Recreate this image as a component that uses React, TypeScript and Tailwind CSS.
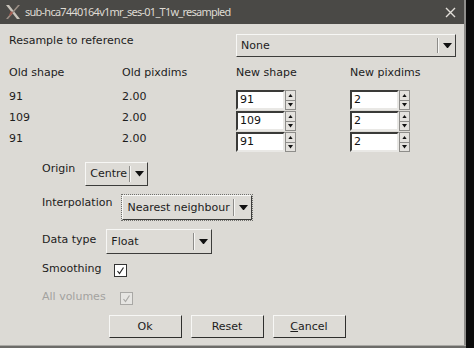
import React from "react"

const font = { fontFamily: '"DejaVu Sans", sans-serif' }

function Arrow({ up = false, size = 8 }: { up?: boolean; size?: number }) {
  const h = size / 2 + 1
  return (
    <svg width={size} height={h} viewBox={`0 0 ${size} ${h}`}>
      {up ? (
        <polygon points={`0,${h} ${size},${h} ${size / 2},0`} fill="#111" />
      ) : (
        <polygon points={`0,0 ${size},0 ${size / 2},${h}`} fill="#111" />
      )}
    </svg>
  )
}

function Dropdown({ label, width, focus = false, height = 24 }: { label: string; width: string; focus?: boolean; height?: number }) {
  return (
    <div
      className={`${width} flex shrink-0 items-center border border-t-[#f7f7f5] border-l-[#f7f7f5] border-b-[#3c3c3a] border-r-[#3c3c3a] bg-[#dddbd6] ${focus ? "outline outline-1 outline-dotted outline-[#6f6f6c]" : ""}`}
      style={{ height }}
    >
      <span className="flex-1 overflow-hidden whitespace-nowrap pl-[4px] text-[11px] leading-[14px] text-[#1c1c1c]">{label}</span>
      <div className="flex h-full items-center py-[3px]">
        <div className="h-full w-[2px] border-l border-l-[#8d8c89] border-r border-r-[#f7f7f5]" />
      </div>
      <div className="flex w-[16px] items-center justify-center">
        <Arrow size={9} />
      </div>
    </div>
  )
}

function SpinBox({ value }: { value: string }) {
  return (
    <div className="flex h-[20px] w-[60px]">
      <div className="flex flex-1 items-center border-2 border-t-[#3a3a38] border-l-[#3a3a38] border-b-[#e9e8e5] border-r-[#e9e8e5] bg-white pl-[2px] text-[11px] leading-[14px] text-[#111]">
        {value}
      </div>
      <div className="flex w-[11px] flex-col border border-[#8e8d8a] bg-[#dddbd6]">
        <div className="flex flex-1 items-center justify-center border-b border-b-[#8e8d8a] bg-[#e4e2de]">
          <Arrow up size={5} />
        </div>
        <div className="flex flex-1 items-center justify-center bg-[#e4e2de]">
          <Arrow size={5} />
        </div>
      </div>
    </div>
  )
}

function CheckBox({ disabled = false }: { disabled?: boolean }) {
  const c = disabled ? "#a9a8a5" : "#222"
  return (
    <div
      className={`flex h-[13px] w-[13px] shrink-0 items-center justify-center border ${disabled ? "border-[#a9a8a5] bg-[#e6e5e2]" : "border-[#333] bg-white"}`}
    >
      <svg width="9" height="9" viewBox="0 0 9 9">
        <polyline points="1.5,5 3.5,7.5 7.5,1.5" fill="none" stroke={c} strokeWidth="1.2" />
      </svg>
    </div>
  )
}

function Button({ children }: { children: React.ReactNode }) {
  return (
    <div className="flex h-[23px] w-[73px] items-center justify-center border border-t-[#f7f7f5] border-l-[#f7f7f5] border-b-[#2f2f2d] border-r-[#2f2f2d] bg-[#dddbd6] text-[11px] leading-[14px] text-[#1c1c1c]">
      {children}
    </div>
  )
}

function XLogo() {
  return (
    <svg width="16" height="16" viewBox="0 0 16 16">
      <polygon points="1,1 4,1 15,15 12,15" fill="#c9c4bb" />
      <polygon points="13,1 15,1 3,15 1,15" fill="#9c8f86" />
      <polygon points="6,7 8,9 5,12 4,11" fill="#a35b50" />
    </svg>
  )
}

export default function App() {
  const rows = [
    ["91", "2.00", "91", "2"],
    ["109", "2.00", "109", "2"],
    ["91", "2.00", "91", "2"],
  ]

  return (
    <div className="flex h-[348px] w-[474px] flex-col overflow-hidden bg-[#0b0b0b]" style={font}>
      <div className="flex h-[345px]">
        <div className="flex w-[464px] flex-col bg-[#dcdad5]">
          {/* Title bar */}
          <div className="flex h-[24px] shrink-0 items-center bg-[#4a4946] pl-[5px] pr-[8px]">
            <XLogo />
            <span className="ml-[4px] flex-1 text-[11px] tracking-[-0.75px] text-[#dedad3]" style={{ fontFamily: '"Noto Sans", sans-serif' }}>
              sub-hca7440164v1mr_ses-01_T1w_resampled
            </span>
            <svg width="11" height="11" viewBox="0 0 11 11">
              <path d="M1 1 L10 10 M10 1 L1 10" stroke="#e2dfd9" strokeWidth="1.4" />
            </svg>
          </div>

          {/* Shapes */}
          <div className="grid grid-cols-[113px_114px_114px_1fr] pl-[9px] pt-[10px] pr-[8px] text-[11px] leading-[14px] text-[#1c1c1c]">
            <div className="col-span-2 h-[23px]">Resample to reference</div>
            <div className="col-span-2">
              <Dropdown label="None" width="w-[220px]" height={23} />
            </div>

            <div className="mt-[9px]">Old shape</div>
            <div className="mt-[9px]">Old pixdims</div>
            <div className="mt-[9px]">New shape</div>
            <div className="mt-[9px]">New pixdims</div>

            <div className="col-span-4 h-[10px]" />
            {rows.map((r, i) => (
              <React.Fragment key={i}>
                <div className="h-[21px]">{r[0]}</div>
                <div className="h-[21px]">{r[1]}</div>
                <div className="h-[21px]">
                  <SpinBox value={r[2]} />
                </div>
                <div className="h-[21px]">
                  <SpinBox value={r[3]} />
                </div>
              </React.Fragment>
            ))}
          </div>

          {/* Options */}
          <div className="flex flex-col pl-[42px] pt-[9px] text-[11px] leading-[14px] text-[#1c1c1c]">
            <div className="flex items-start gap-[10px]">
              <span>Origin</span>
              <Dropdown label="Centre" width="w-[63px]" />
            </div>
            <div className="mt-[9px] flex items-start gap-[10px]">
              <span className="pt-[1px]">Interpolation</span>
              <Dropdown label="Nearest neighbour" width="w-[130px]" focus height={25} />
            </div>
            <div className="mt-[9px] flex items-start gap-[10px]">
              <span className="pt-[4px]">Data type</span>
              <Dropdown label="Float" width="w-[106px]" height={25} />
            </div>
            <div className="mt-[8px] flex items-start gap-[13px]">
              <span>Smoothing</span>
              <div className="pt-[2px]">
                <CheckBox />
              </div>
            </div>
            <div className="mt-[13px] flex items-start gap-[14px] text-[#a3a29f]">
              <span>All volumes</span>
              <div className="pt-[2px]">
                <CheckBox disabled />
              </div>
            </div>
          </div>

          <div className="mt-[10px] flex justify-center gap-[9px] pr-[10px]">
            <Button>Ok</Button>
            <Button>Reset</Button>
            <Button>
              <span>
                <span className="underline">C</span>ancel
              </span>
            </Button>
          </div>
        </div>
        <div className="w-[2px] bg-[#8f8e8b]" />
      </div>
      <div className="flex h-[3px]">
        <div className="w-[466px] border-t border-t-[#a9a8a4] bg-[#6d6c69]" />
      </div>
    </div>
  )
}
